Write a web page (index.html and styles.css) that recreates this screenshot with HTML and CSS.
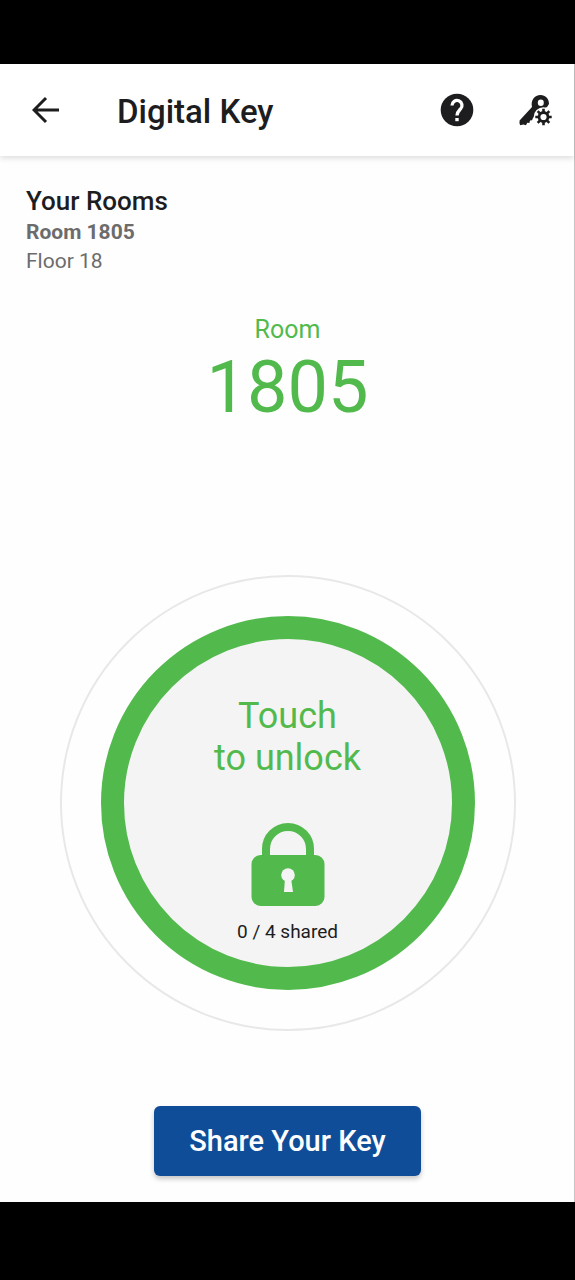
FILE: index.html
```html
<!DOCTYPE html>
<html lang="en">
<head>
<meta charset="utf-8">
<meta name="viewport" content="width=device-width, initial-scale=1">
<title>Digital Key</title>
<link rel="stylesheet" href="styles.css">
</head>
<body>
<div class="screen">
  <header class="app-bar">
    <button class="icon-button" type="button" aria-label="Back">
      <svg width="28" height="28" viewBox="0 0 28 28" fill="none" stroke="currentColor" stroke-width="3"><path d="M27 14H3M14 2L2 14l12 12"/></svg>
    </button>
    <h1 class="title">Digital Key</h1>
    <button class="icon-button help" type="button" aria-label="Help">
      <svg width="34" height="34" viewBox="0 0 34 34"><circle cx="17" cy="17" r="16.3" fill="currentColor"/><path d="M12 12.500a5 5 0 1 1 8.600 3.400C18.600 18 17 19 17 22.600" fill="none" stroke="#fff" stroke-width="3.300"/><path d="M15.300 25h3.400v3.200h-3.400z" fill="#fff"/></svg>
    </button>
    <button class="icon-button" type="button" aria-label="Key settings">
      <svg width="37" height="34" viewBox="0 0 37 34">
        <path d="M15 14C13.500 7 17.500 2 23.500 2c5 0 8.500 3.500 8.500 9L30 14l-8 4-6 7-1 2.300-2 .200-.600 2.500-2.200-.200-1.200 2.500-2.700-.800-3 .800L2.500 30.500 2.600 27.500z" fill="currentColor"/>
        <ellipse cx="23.800" cy="9.800" rx="3" ry="3.200" fill="#fff"/>
        <circle cx="26.500" cy="24" r="9.800" fill="#fff"/>
        <circle cx="26.500" cy="24" r="4.500" fill="none" stroke="currentColor" stroke-width="2.800"/>
        <path d="M26.500 15.800v3.400M26.500 28.800v3.400M18.300 24h3.400M31.300 24h3.400M20.700 18.200l2.400 2.400M29.900 27.400l2.400 2.400M20.700 29.800l2.400-2.400M29.900 20.600l2.400-2.400" stroke="currentColor" stroke-width="2.600"/>
      </svg>
    </button>
  </header>
  <main class="content">
    <section class="rooms">
      <h2 class="rooms-title">Your Rooms</h2>
      <p class="rooms-name">Room 1805</p>
      <p class="rooms-floor">Floor 18</p>
    </section>
    <section class="current">
      <p class="current-label">Room</p>
      <p class="current-number">1805</p>
    </section>
    <div class="halo">
      <button class="unlock" type="button">
        <span class="unlock-text">Touch<br>to unlock</span>
        <svg class="lock" width="74" height="84" viewBox="0 0 74 84">
          <path d="M15 34V26a22 22 0 0 1 44 0v8" fill="none" stroke="currentColor" stroke-width="8"/>
          <rect x=".5" y="32" width="73" height="51" rx="9" fill="currentColor"/>
          <path d="M34 55h6l2 14h-9z" fill="#f4f4f4"/>
          <circle cx="37" cy="52" r="6.800" fill="#f4f4f4"/>
        </svg>
        <span class="shared">0 / 4 shared</span>
      </button>
    </div>
    <button class="share" type="button">Share Your Key</button>
  </main>
</div>
</body>
</html>
```
FILE: styles.css
```css
* { box-sizing: border-box; }
body {
  margin: 0;
  min-height: 100vh;
  padding: 64px 0 78px;
  background: #000;
  color: #1d1d1f;
  font-family: Roboto, sans-serif;
  display: flex;
}
h1, h2, p { margin: 0; font-weight: 400; }
button { font: inherit; color: inherit; border: 0; padding: 0; cursor: pointer; }
.screen {
  flex: 1;
  display: flex;
  flex-direction: column;
  background: #fefefe;
  box-shadow: inset -1px 0 #c4c4c4;
}
.app-bar {
  display: flex;
  align-items: center;
  height: 92px;
  margin-right: 1px;
  padding: 0 20px 0 32px;
  background: #fff;
  box-shadow: 0 2px 6px rgba(0, 0, 0, .14);
}
.icon-button { display: flex; background: none; }
.title {
  flex: 1;
  padding: 3px 0 0 57px;
  font-size: 33px;
  font-weight: 500;
  line-height: 40px;
}
.help { margin-right: 43px; }
.content {
  flex: 1;
  display: flex;
  flex-direction: column;
  align-items: center;
  padding: 28px 26px 26px;
}
.rooms { align-self: stretch; color: #6c6c6c; font-size: 21px; line-height: 29px; }
.rooms-title { color: #1d1d1f; font-size: 26px; font-weight: 500; line-height: 34px; }
.rooms-name { font-weight: 700; }
.current { margin-top: 38px; color: #52ba4d; text-align: center; }
.current-label { font-size: 25px; line-height: 32px; }
.current-number { font-size: 72px; line-height: 84px; }
.halo {
  margin: auto 0 75px;
  padding: 39px;
  border: 2px solid #e8e8e8;
  border-radius: 50%;
}
.unlock {
  display: flex;
  flex-direction: column;
  align-items: center;
  width: 374px;
  aspect-ratio: 1;
  padding-top: 56px;
  border: 23px solid #52ba4d;
  border-radius: 50%;
  background: #f4f4f4;
  color: #52ba4d;
}
.unlock-text { font-size: 36px; line-height: 42px; }
.lock { margin-top: 44px; }
.shared { margin-top: 12px; color: #1d1d1f; font-size: 19px; line-height: 26px; }
.share {
  padding: 15px 35px;
  border-radius: 6px;
  background: #104d98;
  box-shadow: 0 3px 5px rgba(0, 0, 0, .22);
  color: #fff;
  font-size: 29px;
  font-weight: 500;
  line-height: 40px;
}
```
